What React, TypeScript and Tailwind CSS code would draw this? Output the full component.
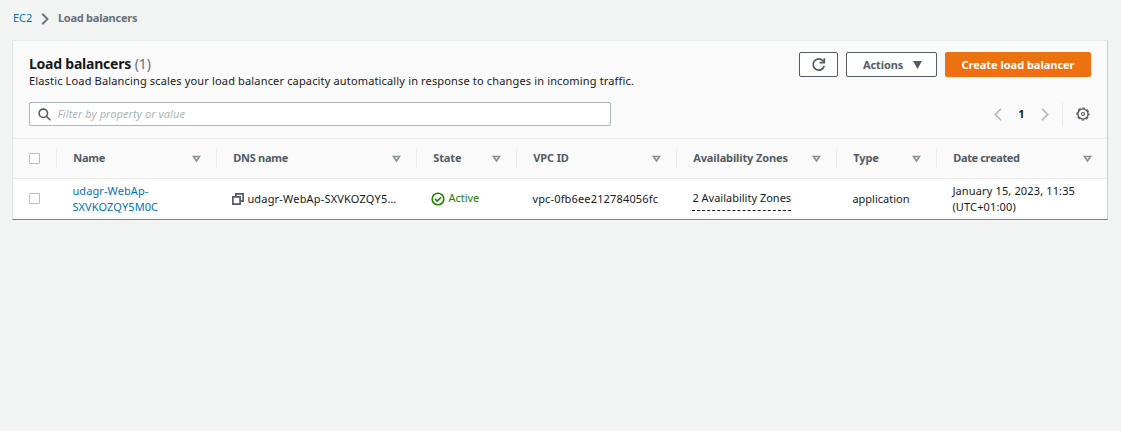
import type { ReactNode } from "react";

type Column = { label: string; width: string; tracking: string };

const columns: Column[] = [
  { label: "Name", width: "w-[160px]", tracking: "tracking-[-0.25px]" },
  { label: "DNS name", width: "w-[200px]", tracking: "tracking-[-0.25px]" },
  { label: "State", width: "w-[100px]", tracking: "tracking-[-0.1px]" },
  { label: "VPC ID", width: "w-[160px]", tracking: "tracking-[-0.1px]" },
  { label: "Availability Zones", width: "w-[160px]", tracking: "tracking-[-0.12px]" },
  { label: "Type", width: "w-[100px]", tracking: "tracking-[-0.1px]" },
  { label: "Date created", width: "w-[171px]", tracking: "tracking-[-0.35px]" },
];

function Chevron({ className, flip = false, strokeWidth = 2 }: { className: string; flip?: boolean; strokeWidth?: number }) {
  return (
    <svg viewBox="0 0 8 13" className={className} fill="none" stroke="currentColor" strokeWidth={strokeWidth}>
      <path d={flip ? "M7 0.8 1.3 6.5 7 12.2" : "M1 0.8 6.7 6.5 1 12.2"} />
    </svg>
  );
}

function RefreshIcon() {
  return (
    <svg viewBox="0 0 16 16" className="size-[16px]" fill="none" stroke="#545b64" strokeWidth="1.7">
      <path d="M13.2 9A5.6 5.6 0 1 1 12 3.8l1 1.2" />
      <path d="M13.3 1.2v4.4H8.6" />
    </svg>
  );
}

function GearIcon() {
  return (
    <svg viewBox="0 0 14 14" className="size-[14px]" fill="none" stroke="#545b64">
      <circle cx="7" cy="7" r="5.1" strokeWidth="1.4" />
      <circle cx="7" cy="7" r="6" strokeWidth="1.2" strokeDasharray="2.7 2.012" strokeDashoffset="1.35" />
      <circle cx="7" cy="7" r="1.5" strokeWidth="1.2" />
    </svg>
  );
}

function SearchIcon() {
  return (
    <svg viewBox="0 0 13 13" className="size-[13px]" fill="none" stroke="#545b64" strokeWidth="1.6">
      <circle cx="5.3" cy="5.3" r="4.2" />
      <path d="m8.3 8.3 4 4" />
    </svg>
  );
}

function CopyIcon() {
  return (
    <svg viewBox="0 0 12 12" className="size-[12px]" fill="none" stroke="#545b64" strokeWidth="1.7">
      <path d="M3.8 3.5V.9h7.3v7.2H8.5" />
      <path d="M.9 3.9h7.2v7.2H.9z" />
    </svg>
  );
}

function CheckIcon() {
  return (
    <svg viewBox="0 0 14 14" className="-ml-px size-[14px]" fill="none" stroke="#1d8102" strokeWidth="1.6">
      <circle cx="7" cy="7" r="5.8" />
      <path d="m4 6.9 2.2 2.2 3.9-3.9" />
    </svg>
  );
}

function SortIcon() {
  return (
    <svg viewBox="0 0 9 8" className="h-[8px] w-[9px]" fill="none" stroke="#879596" strokeWidth="1.6">
      <path d="M1.5 1.5h6L4.5 6z" />
    </svg>
  );
}

function Checkbox() {
  return <span role="checkbox" aria-checked="false" className="block size-[11px] rounded-[1px] border border-[#b5c0c1] bg-white" />;
}

function Cell({ width, children }: { width: string; children: ReactNode }) {
  return <div className={`${width} flex shrink-0 items-center pl-[16.4px] whitespace-nowrap`}>{children}</div>;
}

export default function App() {
  return (
    <div className="h-[431px] w-[1121px] overflow-hidden bg-[#f2f3f3] font-['Noto_Sans',sans-serif] text-[11px] text-[#16191f]">
      <nav className="flex h-[40px] items-center pb-[3px] pl-[13px]">
        <a className="text-[#0073bb]">EC2</a>
        <Chevron className="mr-[8.5px] ml-[9px] h-[12px] w-[8px] text-[#687078]" />
        <span className="font-bold tracking-[-0.24px] text-[#687078]">Load balancers</span>
      </nav>

      <main className="ml-[12px] h-[180px] w-[1096px] border border-t-[#eaeded] border-r-[#c8cdcf] border-b-[#7d858c] border-l-[#e3e6e6] bg-white">
        <div className="h-[97px] bg-[#fafafa] pr-[16px] pl-[16px]">
          <div className="flex h-[48px] justify-between pt-[11px]">
            <div className="pt-[3px]">
              <h1 className="text-[14px] leading-[18px] font-bold">
                <span className="tracking-[-0.23px]">Load balancers</span> <span className="font-normal text-[#687078]">(1)</span>
              </h1>
              <p className="text-[11px] leading-[16px] tracking-[0.156px]">
                Elastic Load Balancing scales your load balancer capacity automatically in response to changes in incoming traffic.
              </p>
            </div>
            <div className="flex gap-[8px] text-[11px] font-bold">
              <button aria-label="Refresh" className="flex h-[25px] w-[39px] items-center justify-center rounded-[2px] border border-[#545b64] bg-white">
                <RefreshIcon />
              </button>
              <button className="flex h-[25px] w-[91px] items-center justify-between rounded-[2px] border border-[#545b64] bg-white pr-[14px] pl-[16px] text-[#545b64]">
                <span className="pt-px tracking-[-0.1px]">Actions</span>
                <svg viewBox="0 0 9 8" className="h-[8px] w-[9px]" fill="#545b64"><path d="M0 0h9L4.5 8z" /></svg>
              </button>
              <button className="h-[25px] w-[146px] rounded-[2px] bg-[#ec7211] pt-px tracking-[-0.02px] text-white">Create load balancer</button>
            </div>
          </div>

          <div className="flex items-center justify-between pt-[13px]">
            <div className="flex h-[24px] w-[582px] items-center rounded-[2px] border border-[#aab7b8] bg-white pl-[7.5px]">
              <SearchIcon />
              <span className="ml-[7px] tracking-[0.07px] text-[#aab7b8] italic">Filter by property or value</span>
            </div>
            <div className="flex h-[24px] items-center">
              <Chevron flip strokeWidth={1.6} className="h-[13px] w-[8px] text-[#aab7b8]" />
              <span className="w-[39px] text-center font-bold">1</span>
              <Chevron strokeWidth={1.6} className="h-[13px] w-[8px] text-[#aab7b8]" />
              <span className="ml-[13px] h-[24px] w-px bg-[#eaeded]" />
              <span className="mr-[1.5px] ml-[12.5px]"><GearIcon /></span>
            </div>
          </div>
        </div>

        <div className="flex h-[41px] items-center border-y border-[#eaeded] bg-[#fafafa] font-bold text-[#545b64]">
          <div className="w-[43px] pl-[16px]"><Checkbox /></div>
          {columns.map((column) => (
            <div key={column.label} className={`${column.width} flex h-[19px] shrink-0 items-center justify-between border-l border-[#eaeded] pr-[15px] pl-[16.2px] whitespace-nowrap`}>
              <span className={column.tracking}>{column.label}</span>
              <SortIcon />
            </div>
          ))}
        </div>

        <div className="flex h-[39px] items-center leading-[16px]">
          <div className="w-[43px] pl-[16px]"><Checkbox /></div>
          <Cell width="w-[160px]">
            <a className="tracking-[0.1px] text-[#0073bb]">udagr-WebAp-<br />SXVKOZQY5M0C</a>
          </Cell>
          <Cell width="w-[200px]">
            <CopyIcon />
            <span className="ml-[3px] tracking-[0.18px]">udagr-WebAp-SXVKOZQY5…</span>
          </Cell>
          <Cell width="w-[100px]">
            <CheckIcon />
            <span className="ml-[3px] pb-px text-[#1d8102]">Active</span>
          </Cell>
          <Cell width="w-[160px]"><span className="tracking-[0.16px]">vpc-0fb6ee212784056fc</span></Cell>
          <Cell width="w-[160px]">
            <span className="mt-[4px] border-b border-dashed border-[#16191f] pb-[4px]">2 Availability Zones</span>
          </Cell>
          <Cell width="w-[100px]">application</Cell>
          <Cell width="w-[170px]">
            <span className="tracking-[0.14px]">January 15, 2023, 11:35<br />(UTC+01:00)</span>
          </Cell>
        </div>
      </main>
    </div>
  );
}
